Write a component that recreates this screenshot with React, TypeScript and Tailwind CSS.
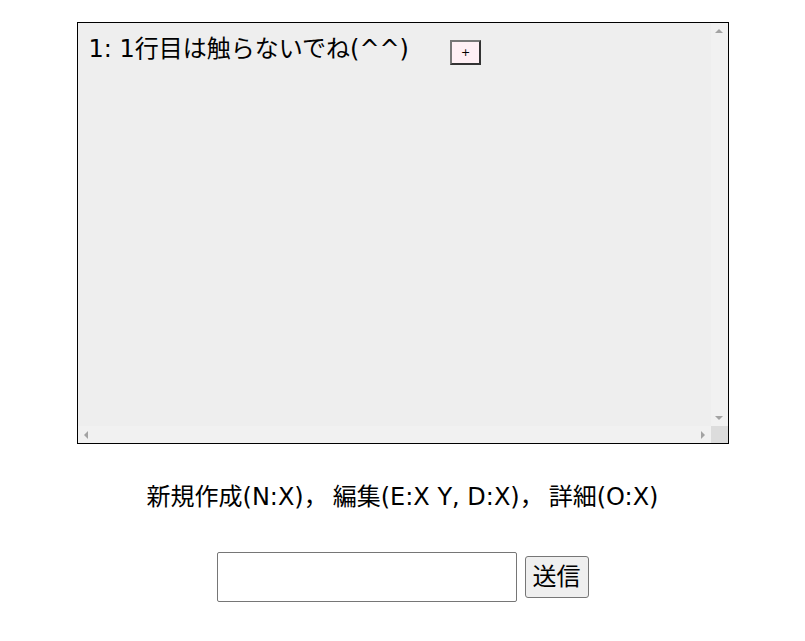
import React from 'react';

const jp = { fontFamily: '"DejaVu Sans", "Noto Sans CJK JP", sans-serif' };

function ScrollArrow({ dir }: { dir: 'up' | 'down' | 'left' | 'right' }) {
  const pts = {
    up: '0,4 4,0 8,4',
    down: '0,0 8,0 4,4',
    left: '4,0 4,8 0,4',
    right: '0,0 4,4 0,8',
  }[dir];
  const vertical = dir === 'up' || dir === 'down';
  return (
    <svg width={vertical ? 8 : 4} height={vertical ? 4 : 8} viewBox={vertical ? '0 0 8 4' : '0 0 4 8'}>
      <polygon points={pts} fill="#a3a3a3" />
    </svg>
  );
}

export default function App() {
  return (
    <div className="min-h-[641px] bg-white flex flex-col items-center pt-[22px] text-black" style={jp}>
      <div className="w-[652px] h-[422px] border border-black flex flex-col bg-[#eeeeee]">
        <div className="flex flex-1 min-h-0">
          <div className="flex-1 pl-[11px] pt-[10px]">
            <div className="flex items-start h-[32px]">
              <span className="text-[24px] leading-[32px]">1: 1行目は触らないでね(^^)</span>
              <button className="ml-[41px] mt-[7px] w-[31px] h-[25px] bg-[#fff0f5] border-2 border-t-[#777777] border-l-[#777777] border-r-[#333333] border-b-[#333333] text-[11px] leading-none flex items-center justify-center">
                +
              </button>
            </div>
          </div>
          <div className="w-[17px] bg-[#f1f1f1] flex flex-col items-center justify-between py-[6px]">
            <ScrollArrow dir="up" />
            <ScrollArrow dir="down" />
          </div>
        </div>
        <div className="flex h-[17px]">
          <div className="flex-1 bg-[#f1f1f1] flex items-center justify-between px-[6px]">
            <ScrollArrow dir="left" />
            <ScrollArrow dir="right" />
          </div>
          <div className="w-[17px] bg-[#dcdcdc]" />
        </div>
      </div>

      <div className="mt-[37px] text-[24px] leading-[32px]">
        新規作成(N:X)<span className="mr-[5px]">，</span>編集(E:X Y, D:X)<span className="mr-[5px]">，</span>詳細(O:X)
      </div>

      <div className="mt-[39px] flex items-center gap-[8px]">
        <input
          type="text"
          className="w-[300px] h-[50px] border border-[#767676] rounded-[2px] bg-white outline-none"
        />
        <button className="w-[64px] h-[42px] bg-[#efefef] border border-[#767676] rounded-[3px] text-[24px] leading-none flex items-center justify-center">
          送信
        </button>
      </div>
    </div>
  );
}
